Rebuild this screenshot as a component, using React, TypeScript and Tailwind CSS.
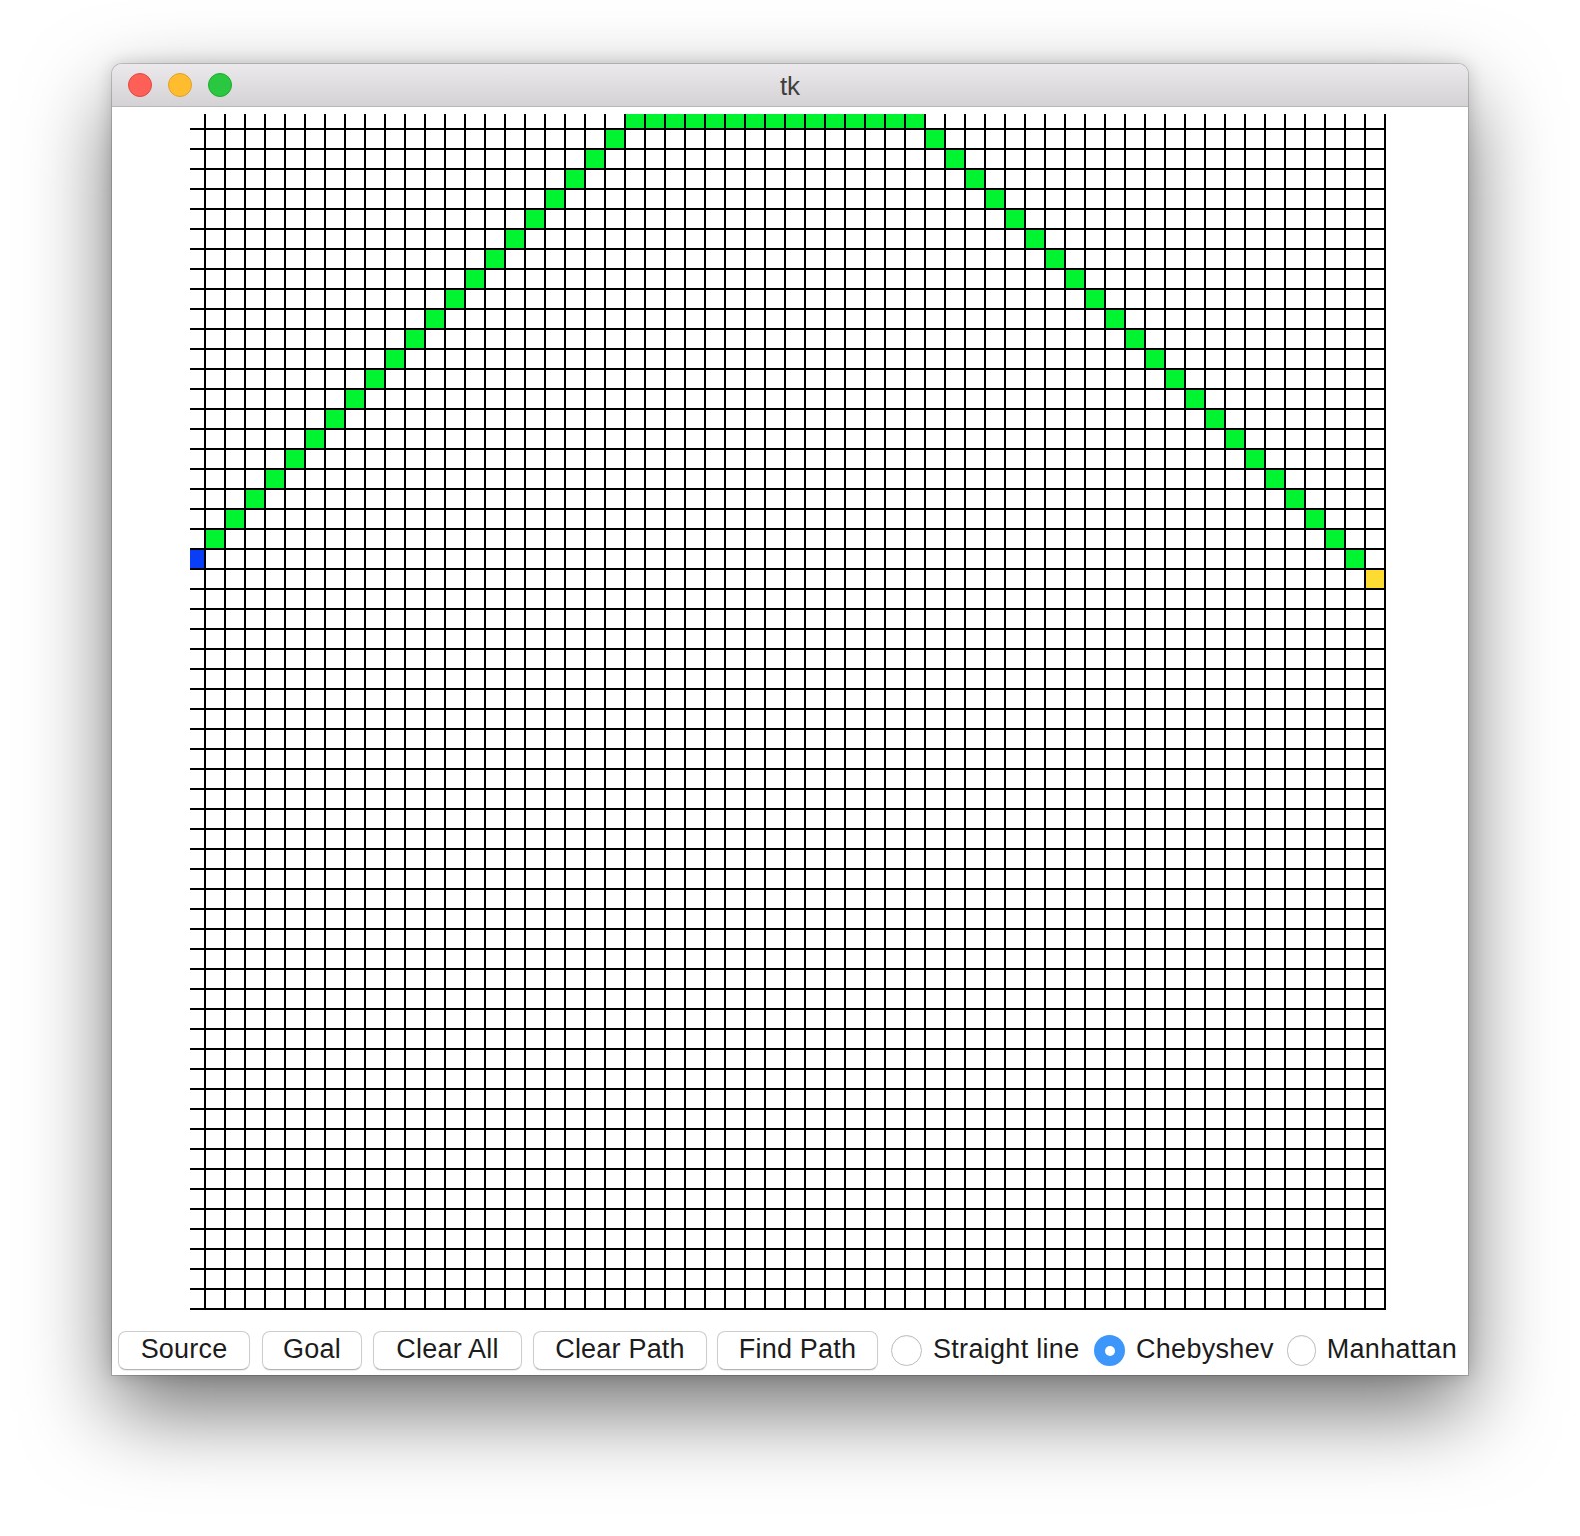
const N = 60;
const SIZE = 1196;

type Cell = { r: number; c: number; fill: string };

const GREEN = '#00f42f';

// path cells as drawn by the tk canvas
function buildCells(): Cell[] {
  const cells: Cell[] = [];
  for (let r = 1; r <= 21; r++) cells.push({ r, c: 22 - r, fill: GREEN });
  for (let c = 22; c <= 36; c++) cells.push({ r: 0, c, fill: GREEN });
  for (let r = 1; r <= 22; r++) cells.push({ r, c: 36 + r, fill: GREEN });
  cells.push({ r: 22, c: 0, fill: '#0a3ef6' });
  cells.push({ r: 23, c: 59, fill: '#fedb30' });
  return cells;
}

// first row/column is clipped by the canvas edge
function span(i: number) {
  return i === 0 ? { start: 0, len: 14 } : { start: i * 20 - 4, len: 18 };
}

function Grid() {
  const cells = buildCells();
  const lines = Array.from({ length: N }, (_, k) => 14 + k * 20);
  return (
    <svg width={SIZE} height={SIZE} viewBox={`0 0 ${SIZE} ${SIZE}`} className="block" shapeRendering="crispEdges">
      <rect x={0} y={0} width={SIZE} height={SIZE} fill="#fff" />
      {cells.map((cell, i) => {
        const x = span(cell.c);
        const y = span(cell.r);
        return <rect key={i} x={x.start} y={y.start} width={x.len} height={y.len} fill={cell.fill} />;
      })}
      {lines.map(p => (
        <rect key={`v${p}`} x={p} y={0} width={2} height={SIZE} fill="#000" />
      ))}
      {lines.map(p => (
        <rect key={`h${p}`} x={0} y={p} width={SIZE} height={2} fill="#000" />
      ))}
    </svg>
  );
}

function Button({ label, width, ml }: { label: string; width: string; ml: string }) {
  return (
    <div
      className={`flex h-[39px] items-center justify-center rounded-[8px] border border-[#cdcdcd] border-b-[#b4b4b4] bg-white pb-[4px] text-[27px] tracking-[0.2px] text-[#1c1c1c] shadow-[0_1px_1px_rgba(0,0,0,0.08)] ${width} ${ml}`}
    >
      {label}
    </div>
  );
}

function Radio({ label, checked, width, ml }: { label: string; checked?: boolean; width: string; ml: string }) {
  return (
    <div className={`flex items-center ${width} ${ml}`}>
      {checked ? (
        <div className="flex h-[31px] w-[31px] items-center justify-center rounded-full bg-[#3d97fb]">
          <div className="h-[10px] w-[10px] rounded-full bg-white" />
        </div>
      ) : (
        <div className="h-[31px] w-[31px] rounded-full border border-[#bdbdbd] bg-white shadow-[inset_0_1px_1px_rgba(0,0,0,0.05)]" />
      )}
      <span className="mb-[3px] ml-[11px] text-[27px] tracking-[0.3px] text-[#1c1c1c]">{label}</span>
    </div>
  );
}

export default function App() {
  return (
    <div className="h-[1536px] w-[1580px] bg-white pl-[112px] pt-[64px] font-['Liberation_Sans',Arial,sans-serif]">
      <div className="flex h-[1311px] w-[1356px] flex-col overflow-hidden rounded-t-[10px] bg-white shadow-[0_36px_85px_rgba(0,0,0,0.55),0_0_18px_rgba(0,0,0,0.18),0_0_0_1px_rgba(0,0,0,0.16)]">
        <div className="relative flex h-[43px] shrink-0 items-center border-b border-[#b8b6b8] bg-gradient-to-b from-[#ebe9eb] to-[#d4d2d4]">
          <div className="ml-[16px] flex gap-[16px]">
            <div className="h-[24px] w-[24px] rounded-full border border-[#e2463f] bg-[#fe5f57]" />
            <div className="h-[24px] w-[24px] rounded-full border border-[#e0a223] bg-[#febc2e]" />
            <div className="h-[24px] w-[24px] rounded-full border border-[#1aab29] bg-[#2ac840]" />
          </div>
          <div className="absolute inset-x-0 top-[9px] text-center text-[26px] leading-[26px] text-[#3f3f3f]">tk</div>
        </div>
        <div className="ml-[78px] mt-[7px]">
          <Grid />
        </div>
        <div className="mt-[19px] flex items-center">
          <Button label="Source" width="w-[132px]" ml="ml-[6px]" />
          <Button label="Goal" width="w-[100px]" ml="ml-[12px]" />
          <Button label="Clear All" width="w-[149px]" ml="ml-[11px]" />
          <Button label="Clear Path" width="w-[174px]" ml="ml-[11px]" />
          <Button label="Find Path" width="w-[161px]" ml="ml-[10px]" />
          <Radio label="Straight line" width="w-[203px]" ml="ml-[13px]" />
          <Radio label="Chebyshev" checked width="w-[193px]" ml="ml-0" />
          <Radio label="Manhattan" width="w-[170px]" ml="ml-0" />
        </div>
      </div>
    </div>
  );
}
